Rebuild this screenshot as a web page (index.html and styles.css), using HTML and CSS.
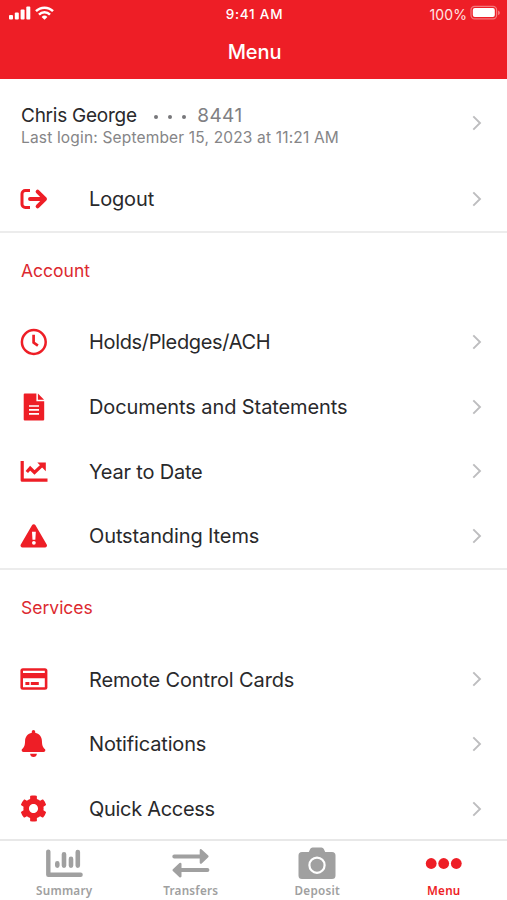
FILE: index.html
```html
<!DOCTYPE html>
<html lang="en">
<head>
<meta charset="utf-8">
<title>Menu</title>
<link rel="stylesheet" href="styles.css">
</head>
<body>
<svg class="defs" aria-hidden="true">
  <symbol id="chevron" viewBox="0 0 10 16"><path d="M1.3 1.3 8 8l-6.7 6.7" fill="none" stroke="currentColor" stroke-width="1.9"/></symbol>
</svg>
<div class="app">
  <header class="header">
    <div class="status">
      <div class="signal">
        <svg width="22" height="14" viewBox="0 0 22 14" fill="currentColor"><rect x="0" y="9" width="4" height="4.6" rx="1"/><rect x="5.8" y="6.4" width="4" height="7.2" rx="1"/><rect x="11.6" y="3.6" width="4" height="10" rx="1"/><rect x="17.3" y=".6" width="4" height="13" rx="1"/></svg>
        <svg width="19" height="14" viewBox="0 0 19 14"><g fill="none" stroke="currentColor" stroke-width="2.5"><path d="M1 5.2a12.1 12.1 0 0 1 17 0"/><path d="M4 8.6a7.8 7.8 0 0 1 11 0"/></g><path d="M9.5 13.8 6.6 11a4.1 4.1 0 0 1 5.8 0z" fill="currentColor"/></svg>
      </div>
      <span class="time">9:41 AM</span>
      <div class="power">
        <span class="percent">100%</span>
        <svg width="31" height="16" viewBox="0 0 31 16"><rect x="1" y="1.3" width="25.6" height="12.6" rx="3.6" fill="none" stroke="#fff" stroke-opacity=".4" stroke-width="1.2"/><rect x="2.8" y="3.1" width="22" height="9" rx="2" fill="#fff"/><path d="M28.2 5.4v4.6c2-.8 2-3.8 0-4.6z" fill="#fff" opacity=".5"/></svg>
      </div>
    </div>
    <h1 class="title">Menu</h1>
  </header>
  <main class="content">
    <section class="section">
      <a class="profile">
        <div class="who">
          <div class="name-line"><span class="name">Chris George</span><span class="dots"><i></i><i></i><i></i></span><span class="digits">8441</span></div>
          <div class="login">Last login: September 15, 2023 at 11:21 AM</div>
        </div>
        <svg class="chevron"><use href="#chevron"/></svg>
      </a>
      <a class="row">
        <svg class="icon" viewBox="0 0 28 28" fill="none" stroke="currentColor"><path d="M10 5.5H5.3A3.3 3.3 0 0 0 2 8.8v10.4a3.3 3.3 0 0 0 3.3 3.3H10" stroke-width="3"/><path d="M10 14h15M17.6 6.6 25 14l-7.4 7.4" stroke-width="3.9" stroke-linecap="round" stroke-linejoin="round"/></svg>
        <span class="label logout">Logout</span><svg class="chevron"><use href="#chevron"/></svg>
      </a>
    </section>
    <section class="section">
      <h2 class="heading account">Account</h2>
      <a class="row">
        <svg class="icon" viewBox="0 0 28 28" fill="none" stroke="currentColor"><circle cx="13.8" cy="14" r="11.9" stroke-width="2.5"/><path d="M13.6 6.8v7.8l4.3 3.1" stroke-width="2.7"/></svg>
        <span class="label holds">Holds/Pledges/ACH</span><svg class="chevron"><use href="#chevron"/></svg>
      </a>
      <a class="row">
        <svg class="icon" viewBox="0 0 28 28" fill="currentColor"><path d="M4.8.5h11.6v7.7h7.8v18.2a1.1 1.1 0 0 1-1.1 1.1H4.8a1.1 1.1 0 0 1-1.1-1.1V1.6A1.1 1.1 0 0 1 4.8.5zM17.9.6l6.2 6.1h-6.2z"/><path d="M9 13h10M9 16.9h10M9 20.8h10" stroke="#fff" stroke-width="1.7"/></svg>
        <span class="label docs">Documents and Statements</span><svg class="chevron"><use href="#chevron"/></svg>
      </a>
      <a class="row">
        <svg class="icon" viewBox="0 0 28 28" fill="none" stroke="currentColor"><path d="M2.2 4v19.2h25.3" stroke-width="3.2" stroke-linejoin="round"/><path d="m6.8 15 3.4-3.8 4.3 4.2 7.8-7.3" stroke-width="3.3"/><path d="M17.3 5.6h8.5v8.6z" fill="currentColor" stroke="none"/></svg>
        <span class="label year">Year to Date</span><svg class="chevron"><use href="#chevron"/></svg>
      </a>
      <a class="row">
        <svg class="icon" viewBox="0 0 28 28"><path d="M12 3.2a2 2 0 0 1 3.5 0l11.2 19.3a2 2 0 0 1-1.7 3H2.5a2 2 0 0 1-1.7-3z" fill="currentColor"/><path d="M12 9.7h3.8l-.5 8h-2.8z" fill="#fff"/><circle cx="13.9" cy="20.8" r="1.9" fill="#fff"/></svg>
        <span class="label items">Outstanding Items</span><svg class="chevron"><use href="#chevron"/></svg>
      </a>
    </section>
    <section class="section last">
      <h2 class="heading services">Services</h2>
      <a class="row">
        <svg class="icon" viewBox="0 0 28 28"><rect x=".4" y="3.3" width="27" height="21.4" rx="2.5" fill="currentColor"/><path d="M3 5.8h21.8v2.3H3zM3 13.2h21.8v9H3z" fill="#fff"/><path d="M5.4 16.9h4v3h-4zM10.8 16.9h8v3h-8z" fill="currentColor"/></svg>
        <span class="label cards">Remote Control Cards</span><svg class="chevron"><use href="#chevron"/></svg>
      </a>
      <a class="row">
        <svg class="icon glyph" viewBox="-32 0 512 512" fill="currentColor"><path d="M224 512c35.32 0 63.97-28.65 63.97-64H160.03c0 35.35 28.65 64 63.97 64zm215.39-149.71c-19.32-20.76-55.47-51.99-55.47-154.29 0-77.7-54.48-139.9-127.94-155.16V32c0-17.67-14.32-32-31.98-32s-31.98 14.33-31.98 32v20.84C118.56 68.1 64.08 130.3 64.08 208c0 102.3-36.15 133.53-55.47 154.29-6 6.45-8.66 14.16-8.61 21.71.11 16.4 12.98 32 32.1 32h383.8c19.12 0 32-15.6 32.1-32 .05-7.55-2.61-15.27-8.61-21.71z"/></svg>
        <span class="label notes">Notifications</span><svg class="chevron"><use href="#chevron"/></svg>
      </a>
      <a class="row">
        <svg class="icon glyph" viewBox="0 0 512 512" fill="currentColor"><path d="M487.4 315.7l-42.6-24.6c4.3-23.2 4.3-47 0-70.2l42.6-24.6c4.9-2.8 7.1-8.6 5.5-14-11.1-35.6-30-67.8-54.7-94.6-3.8-4.1-10-5.1-14.8-2.3L380.8 110c-17.9-15.4-38.5-27.3-60.8-35.1V25.8c0-5.6-3.9-10.5-9.4-11.7-36.7-8.2-74.3-7.8-109.2 0-5.5 1.2-9.4 6.1-9.4 11.7V75c-22.2 7.9-42.8 19.8-60.8 35.1L88.7 85.5c-4.9-2.8-11-1.9-14.8 2.3-24.7 26.7-43.6 58.9-54.7 94.6-1.7 5.4.6 11.2 5.5 14L67.3 221c-4.3 23.2-4.3 47 0 70.2l-42.6 24.6c-4.9 2.8-7.1 8.6-5.5 14 11.1 35.6 30 67.8 54.7 94.6 3.8 4.1 10 5.1 14.8 2.3l42.6-24.6c17.9 15.4 38.5 27.3 60.8 35.1v49.2c0 5.6 3.9 10.5 9.4 11.7 36.7 8.2 74.3 7.8 109.2 0 5.5-1.2 9.4-6.1 9.4-11.7v-49.2c22.2-7.9 42.8-19.8 60.8-35.1l42.6 24.6c4.9 2.8 11 1.9 14.8-2.3 24.7-26.7 43.6-58.9 54.7-94.6 1.5-5.5-.7-11.3-5.6-14.1zM256 342c-47 0-86-39-86-86s39-86 86-86 86 39 86 86-39 86-86 86z"/></svg>
        <span class="label quick">Quick Access</span><svg class="chevron"><use href="#chevron"/></svg>
      </a>
    </section>
  </main>
  <nav class="tabs">
    <a class="tab">
      <svg width="40" height="34" viewBox="0 0 40 34" fill="none" stroke="currentColor" stroke-linecap="round" stroke-linejoin="round"><path d="M4.3 5.6v23.2h32.3" stroke-width="4.4"/><path d="M13.3 17.4v2.2M20 8.3v11.3M27 12.9v6.7M33.8 6v13.6" stroke-width="4.6"/></svg>
      <span class="tab-label">Summary</span>
    </a>
    <a class="tab">
      <svg width="40" height="34" viewBox="0 0 40 34" fill="currentColor" stroke="currentColor" stroke-linecap="round" stroke-linejoin="round"><path d="M3.3 10.4h26.4M9.5 24.1h26.9" fill="none" stroke-width="4"/><path d="m29.9 4.3 6.5 6.1-6.5 6.2zM9.3 18l-6.6 6.1 6.6 6.2z" stroke-width="2.4"/></svg>
      <span class="tab-label">Transfers</span>
    </a>
    <a class="tab">
      <svg width="40" height="34" viewBox="0 0 40 34"><path d="M5 6h6.8l1.4-3a2.5 2.5 0 0 1 2.3-1.6h9a2.5 2.5 0 0 1 2.3 1.6l1.4 3H35a3.5 3.5 0 0 1 3.5 3.5v20a3.5 3.5 0 0 1-3.5 3.5H5a3.5 3.5 0 0 1-3.5-3.5v-20A3.5 3.5 0 0 1 5 6z" fill="currentColor"/><circle cx="20" cy="19.2" r="7.6" fill="none" stroke="#fff" stroke-width="2.2"/></svg>
      <span class="tab-label">Deposit</span>
    </a>
    <a class="tab active">
      <svg width="40" height="34" viewBox="0 0 40 34" fill="currentColor"><circle cx="7.2" cy="17.5" r="5.4"/><circle cx="19.7" cy="17.5" r="5.4"/><circle cx="32.3" cy="17.5" r="5.4"/></svg>
      <span class="tab-label">Menu</span>
    </a>
  </nav>
</div>
</body>
</html>
```
FILE: styles.css
```css
* { box-sizing: border-box; }
body { margin: 0; background: #fff; font-family: Inter, "Liberation Sans", sans-serif; color: #29292b; }
.defs { display: none; }
.app { width: 507px; height: 900px; display: flex; flex-direction: column; overflow: hidden; }
.header { height: 79px; flex: none; background: #ee1e26; color: #fff; }
.status { height: 28px; padding: 0 6px 0 9px; display: grid; grid-template-columns: 1fr auto 1fr; align-items: center; }
.signal { display: flex; gap: 4px; padding-bottom: 2px; }
.time { font-size: 13.5px; font-weight: 500; letter-spacing: .75px; margin-right: 1px; }
.power { display: flex; justify-content: flex-end; align-items: center; gap: 3px; }
.percent { font-size: 14px; letter-spacing: .1px; color: #ffe4e4; }
.power svg { margin-top: -2px; }
.title { margin: 0; height: 49px; line-height: 49px; padding-left: 2px; text-align: center; font-size: 20px; font-weight: 500; letter-spacing: -.1px; }
.content { flex: 1; min-height: 0; overflow: hidden; }
.section { border-bottom: 2px solid #ececec; }
.section.last { border-bottom: 0; }
.profile { height: 87.3px; display: flex; align-items: center; justify-content: space-between; padding: 0 25px 0 21px; }
.name-line { display: flex; align-items: center; height: 25px; font-size: 19px; }
.name { letter-spacing: -.25px; }
.dots { display: flex; gap: 10px; margin: 2px 11px 0 17.5px; }
.dots i { width: 4px; height: 4px; border-radius: 50%; background: #77777a; }
.digits { color: #808083; letter-spacing: .4px; }
.login { height: 19px; line-height: 19px; font-size: 15.5px; letter-spacing: .17px; color: #858587; white-space: nowrap; }
.who { padding-top: 5px; }
.row { height: 64.7px; display: flex; align-items: center; padding: 0 25px 0 20px; }
.icon { width: 28px; height: 28px; flex: none; color: #ee1e26; }
.icon.glyph { width: 27px; height: 27px; margin-right: 1px; }
.label { flex: 1; margin-left: 41px; padding-top: 1px; font-size: 20px; white-space: nowrap; }
.logout { letter-spacing: -.15px; }
.holds { letter-spacing: -.34px; }
.docs { letter-spacing: -.09px; }
.year { letter-spacing: -.2px; }
.items { letter-spacing: -.12px; }
.cards { letter-spacing: -.13px; }
.notes { letter-spacing: -.16px; }
.quick { letter-spacing: -.3px; }
.chevron { width: 10px; height: 16px; flex: none; color: #bdbdbf; }
.heading { margin: 0; height: 76.6px; line-height: 75px; padding-left: 21px; font-size: 17.5px; font-weight: 400; color: #dc2930; }
.tabs { height: 61px; flex: none; border-top: 2px solid #e8e8e8; display: grid; grid-template-columns: repeat(4, 126.5px); padding-left: 1px; background: #fff; }
.tab { display: flex; flex-direction: column; align-items: center; padding-top: 5px; color: #a0a0a0; }
.tab-label { height: 17px; line-height: 17px; margin-top: 2px; font-family: "Noto Sans", sans-serif; font-size: 11.7px; font-weight: 600; letter-spacing: .25px; }
.tab.active { color: #ee1e26; }
```
